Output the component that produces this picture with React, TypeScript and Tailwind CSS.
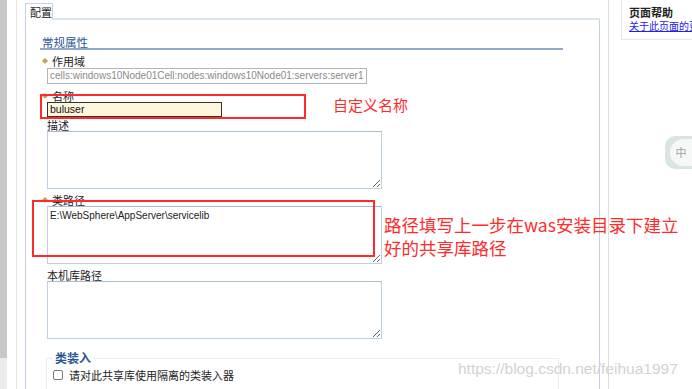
// 共享库配置页 — 常规属性表单，带红色标注
const cjk = "font-['Noto_Sans_CJK_SC','Noto_Sans',sans-serif]";
const latin = "font-['Liberation_Sans','Noto_Sans_CJK_SC',sans-serif]";

function Bullet() {
  return <span className="text-[6px] leading-[12px] text-[#c2a24e] mr-[4px]">◆</span>;
}

function Label({ text, required }: { text: string; required?: boolean }) {
  return (
    <div className={`flex items-center h-[12px] text-[11px] leading-[12px] text-[#222] ${required ? "pl-[2px]" : "pl-[7px]"}`}>
      {required && <Bullet />}
      <span>{text}</span>
    </div>
  );
}

function Area({ value = "" }: { value?: string }) {
  return (
    <textarea
      readOnly
      value={value}
      className={`${latin} block ml-[7px] w-[335px] h-[58px] border border-[#bdd0e6] border-t-[#a9bcd4] bg-white px-[2px] py-[2px] text-[10px] leading-[13px] text-[#222] outline-none`}
    />
  );
}

export default function App() {
  return (
    <div className={`${cjk} relative w-[692px] h-[389px] overflow-hidden bg-white flex`}>
      {/* 左侧滚动条 */}
      <div className="w-[7px] shrink-0 h-full flex flex-col">
        <div className="h-[358px] bg-[#c8c8c8]" />
        <div className="flex-1 bg-[#ebebeb]" />
      </div>
      <div className="w-[10px] shrink-0 h-full border-r border-[#e4e4e4]" />
      <div className="w-[8px] shrink-0" />

      {/* 主面板 */}
      <div className="w-[575px] shrink-0 h-full flex flex-col pt-[3px]">
        <div className="flex h-[18px]">
          <div className="w-[28px] border-l border-t border-r border-[#c6d3e6] text-[11px] leading-[16px] pl-[4px] text-[#222]">配置</div>
          <div className="flex-1 border-b-2 border-[#dce5f1]" />
        </div>
        <div className="flex-1 border-l border-r border-[#c2cfe4] pl-[14px]">
          <div className="mt-[17px] w-[523px] border-b-2 border-[#8eaacb] pl-[2px] text-[11.5px] leading-[11px] h-[13px] text-[#2a5597]">常规属性</div>

          <div className="mt-[5px]">
            <Label text="作用域" required />
            <div className={`${latin} mt-[1px] ml-[7px] w-[320px] h-[16px] border border-[#b4b4b4] px-[2px] text-[10px] leading-[14px] text-[#8a8a8a] whitespace-nowrap overflow-hidden`}>
              cells:windows10Node01Cell:nodes:windows10Node01:servers:server1
            </div>
          </div>

          <div className="mt-[6px]">
            <Label text="名称" required />
            <div className={`${latin} ml-[7px] w-[175px] h-[15px] border border-[#333] bg-[#fdf6da] px-[2px] text-[10.5px] leading-[13px] text-[#111]`}>
              buluser
            </div>
          </div>

          <div className="mt-[2px]">
            <Label text="描述" />
            <Area />
          </div>

          <div className="mt-[5px]">
            <Label text="类路径" required />
            <Area value={"E:\\WebSphere\\AppServer\\servicelib"} />
          </div>

          <div className="mt-[5px]">
            <Label text="本机库路径" />
            <Area />
          </div>

          <fieldset className="mt-[12px] ml-[6px] w-[513px] h-[60px] border border-[#ececec] px-[6px]">
            <legend className="px-[2px] text-[12px] leading-[14px] font-bold text-[#2a5597]">类装入</legend>
            <div className="flex items-center mt-[4px] h-[12px] text-[11px] text-[#222]">
              <span className="w-[10px] h-[10px] border border-[#777] rounded-[2px] bg-white mr-[6px]" />
              <span>请对此共享库使用隔离的类装入器</span>
            </div>
          </fieldset>
        </div>
      </div>

      <div className="w-[9px] shrink-0 h-full border-r border-[#dedede]" />
      <div className="w-[12px] shrink-0" />

      {/* 右侧帮助 */}
      <div className="flex-1 min-w-0 h-full">
        <div className="h-[40px] border-l border-b border-[#e6e6e6] pl-[7px] pt-[5px] whitespace-nowrap overflow-hidden">
          <div className="text-[11px] leading-[14px] font-bold text-[#222]">页面帮助</div>
          <div className="text-[10px] leading-[14px] text-[#2222ee] underline">关于此页面的更多信息</div>
        </div>
      </div>

      {/* 标注 */}
      <div className="absolute left-[40px] top-[94px] w-[266px] h-[25px] border-2 border-[#ff2b2b]" />
      <div className="absolute left-[333px] top-[95px] text-[15px] leading-[20px] text-[#ff2b2b]">自定义名称</div>
      <div className="absolute left-[32px] top-[200px] w-[343px] h-[57px] border-2 border-[#ff2b2b]" />
      <div className="absolute left-[384px] top-[213px] w-[320px] text-[17.5px] leading-[23px] text-[#ff2b2b]">
        路径填写上一步在was安装目录下建立<br />好的共享库路径
      </div>

      {/* 中 按钮 */}
      <div className="absolute right-0 top-[136px] w-[27px] h-[33px] rounded-l-[10px] bg-[#dbe5df] flex items-center justify-end">
        <div className="w-[22px] h-[27px] rounded-l-full bg-[#f5f8f6] flex items-center justify-center text-[11px] text-[#9aa49e]">中</div>
      </div>

      {/* 水印 */}
      <div className="absolute left-[458px] top-[359px] font-['Liberation_Sans',sans-serif] text-[15.5px] leading-[20px] text-[#d2d2d2]">
        https://blog.csdn.net/feihua1997
      </div>
    </div>
  );
}
